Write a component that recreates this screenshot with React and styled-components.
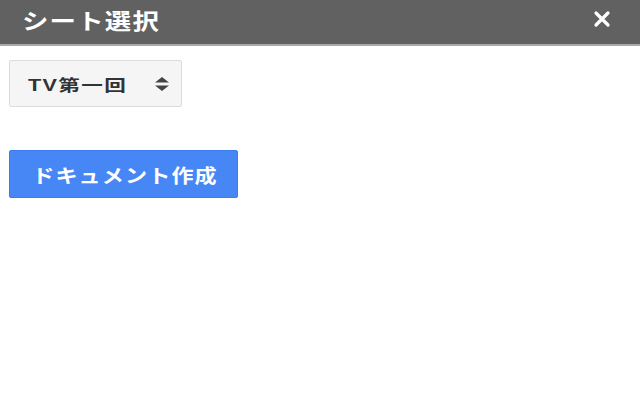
import styled, { createGlobalStyle } from "styled-components";

const GlobalStyle = createGlobalStyle`
  html, body {
    margin: 0;
    padding: 0;
    background: #ffffff;
    font-family: "Liberation Sans", "Noto Sans CJK JP", sans-serif;
  }
`;

const Dialog = styled.div`
  width: 640px;
  height: 400px;
  display: flex;
  flex-direction: column;
  background: #ffffff;
`;

const TitleBar = styled.div`
  height: 46px;
  box-sizing: border-box;
  display: flex;
  align-items: center;
  justify-content: space-between;
  padding: 0 27px 7px 22px;
  background: #616161;
  border-bottom: 2px solid #a9a9a9;
`;

// wide bold lettering: glyphs are drawn a little broader than the font's own
const Wide = styled.span`
  display: inline-block;
  white-space: nowrap;
  transform: scaleX(${(p) => p.$scale});
  transform-origin: ${(p) => (p.$center ? "center" : "left")} center;
`;

const Title = styled.h1`
  margin: 0;
  color: #ffffff;
  font-size: 22px;
  font-weight: bold;
  letter-spacing: 1px;
`;

const CloseButton = styled.button`
  border: none;
  background: none;
  padding: 0;
  width: 22px;
  height: 22px;
  display: flex;
  align-items: center;
  justify-content: center;
  cursor: pointer;
`;

const Body = styled.div`
  display: flex;
  flex-direction: column;
  align-items: flex-start;
  gap: 43px;
  padding: 14px 9px;
`;

const SheetSelect = styled.div`
  width: 173px;
  height: 47px;
  box-sizing: border-box;
  display: flex;
  align-items: center;
  justify-content: space-between;
  padding: 0 11px 0 18px;
  background: #f5f5f5;
  border: 1px solid #dcdcdc;
  border-radius: 2px;
  font-size: 16px;
  font-weight: bold;
  letter-spacing: 1px;
  color: #333333;
`;

const CreateButton = styled.button`
  width: 229px;
  height: 48px;
  padding: 0 0 0 3px;
  border: 1px solid #3d7cf0;
  border-radius: 2px;
  background: #4787f5;
  color: #ffffff;
  font-family: inherit;
  font-size: 19px;
  font-weight: bold;
  letter-spacing: 1px;
  cursor: pointer;
`;

const SortArrows = () => (
  <svg width="16" height="16" viewBox="0 0 16 16">
    <path d="M8 1 L15 6.5 H1 Z" fill="#444" />
    <path d="M8 15 L15 9.5 H1 Z" fill="#444" />
  </svg>
);

export default function App() {
  return (
    <>
      <GlobalStyle />
      <Dialog>
        <TitleBar>
          <Title>
            <Wide $scale={1.2}>シート選択</Wide>
          </Title>
          <CloseButton aria-label="close">
            <svg width="18" height="18" viewBox="0 0 18 18">
              <path
                d="M3 3 L15 15 M15 3 L3 15"
                stroke="#ffffff"
                strokeWidth="3.2"
                strokeLinecap="round"
              />
            </svg>
          </CloseButton>
        </TitleBar>
        <Body>
          <SheetSelect>
            <Wide $scale={1.35}>TV第一回</Wide>
            <SortArrows />
          </SheetSelect>
          <CreateButton>
            <Wide $scale={1.16} $center>
              ドキュメント作成
            </Wide>
          </CreateButton>
        </Body>
      </Dialog>
    </>
  );
}
